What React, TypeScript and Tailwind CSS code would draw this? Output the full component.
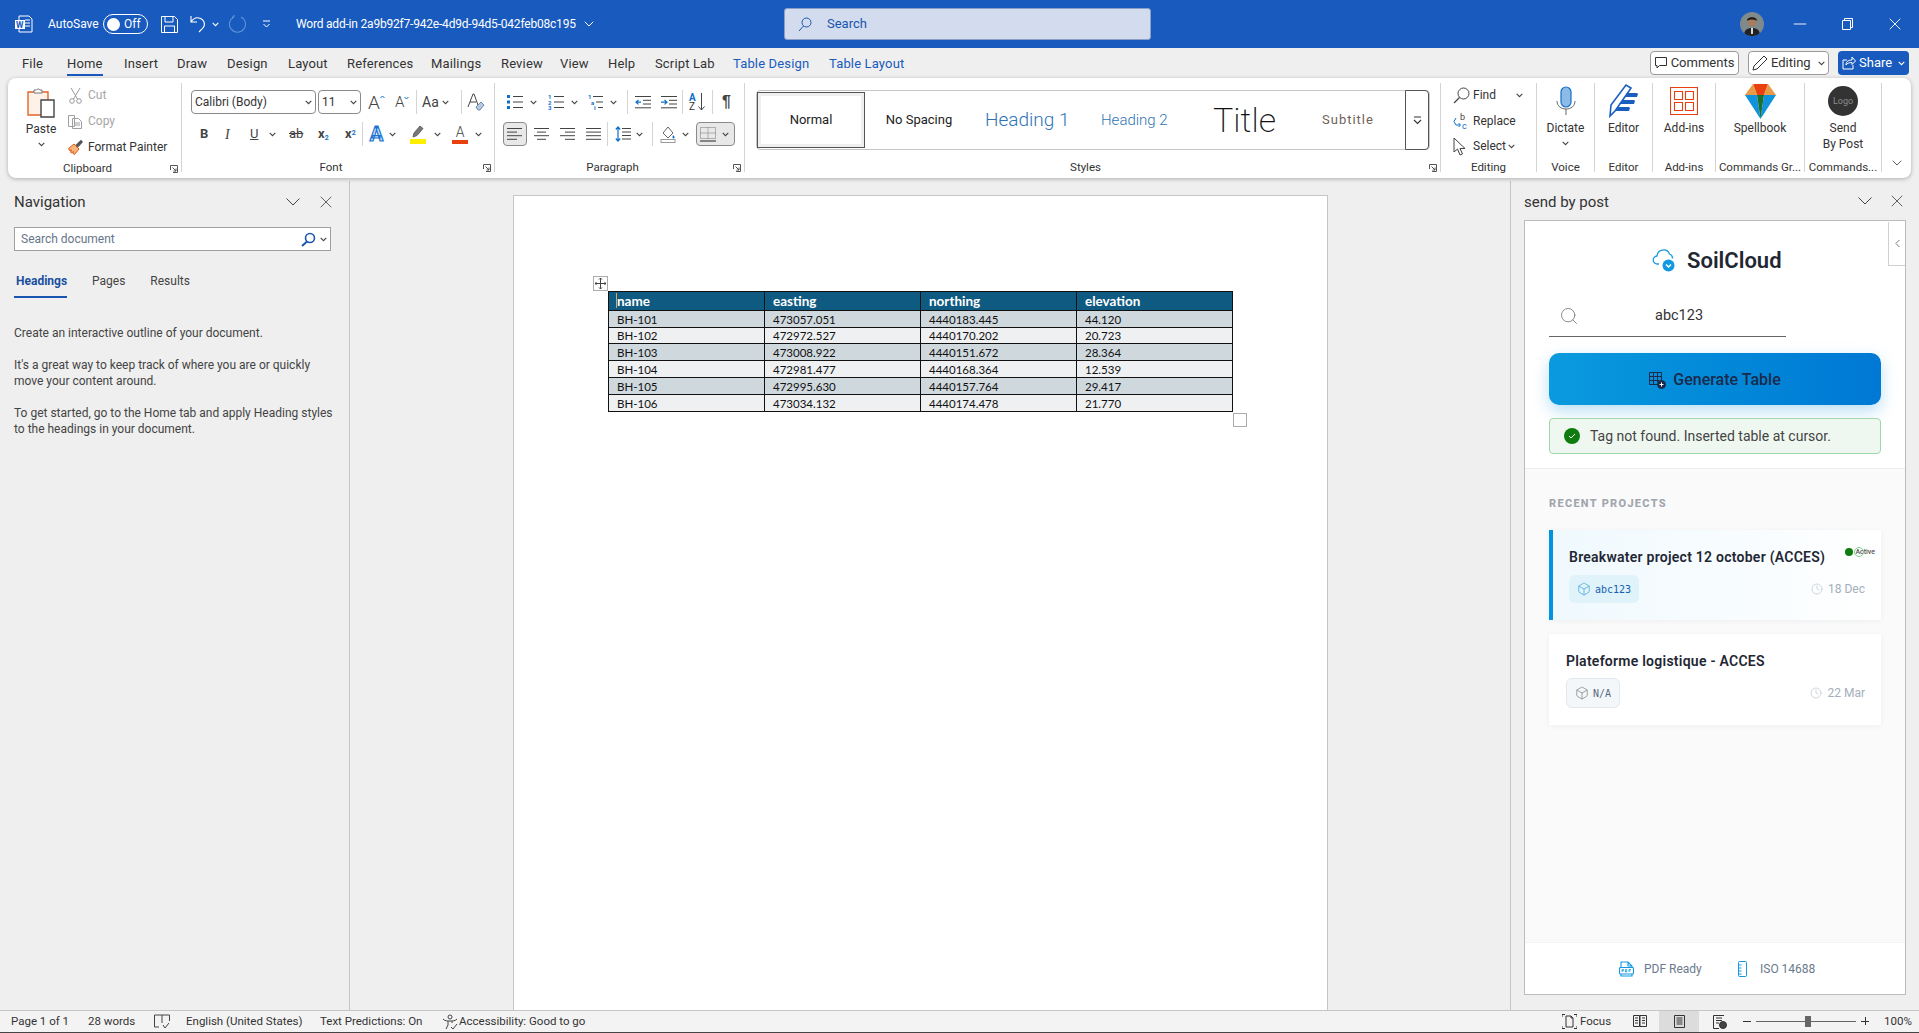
import { Box, ChevronDown, ChevronLeft, Clock, Minus, Search, X } from 'lucide-react';

const TABS = [
  { name: 'File', width: 'w-[45px]' },
  { name: 'Home', width: 'w-[57px]' },
  { name: 'Insert', width: 'w-[53px]' },
  { name: 'Draw', width: 'w-[50px]' },
  { name: 'Design', width: 'w-[61px]' },
  { name: 'Layout', width: 'w-[59px]' },
  { name: 'References', width: 'w-[84px]' },
  { name: 'Mailings', width: 'w-[70px]' },
  { name: 'Review', width: 'w-[59px]' },
  { name: 'View', width: 'w-[48px]' },
  { name: 'Help', width: 'w-[47px]' },
  { name: 'Script Lab', width: 'w-[78px]' },
];

const ROWS = [
  ['BH-101', '473057.051', '4440183.445', '44.120'],
  ['BH-102', '472972.527', '4440170.202', '20.723'],
  ['BH-103', '473008.922', '4440151.672', '28.364'],
  ['BH-104', '472981.477', '4440168.364', '12.539'],
  ['BH-105', '472995.630', '4440157.764', '29.417'],
  ['BH-106', '473034.132', '4440174.478', '21.770'],
];

function Chev({ className = 'text-[#444]' }: { className?: string }) {
  return (
    <svg width="7" height="5" viewBox="0 0 7 5" className={`shrink-0 ${className}`} fill="none" stroke="currentColor" strokeWidth="1.1">
      <path d="M.7.8 3.5 3.6 6.3.8" />
    </svg>
  );
}

function Launcher() {
  return (
    <svg width="8" height="8" viewBox="0 0 8 8" fill="none" stroke="#555" strokeWidth="1" className="absolute right-[3px] top-[5px]">
      <path d="M.5 5V.5H7.5V7.5H3M2.5 2.5 6 6M6 3.5V6H3.5" />
    </svg>
  );
}

function Group({ width, label, launcher, children }: { width: string; label: string; launcher?: boolean; children: React.ReactNode }) {
  return (
    <div className={`${width} flex h-[89px] shrink-0 flex-col border-r border-[#d4d4d4]`}>
      <div className="flex-1">{children}</div>
      <div className={`relative -mb-[3px] h-[16px] text-center text-[11.5px] leading-[16px] text-[#333] whitespace-nowrap ${launcher ? 'pr-[14px]' : ''}`}>
        {label}
        {launcher && <Launcher />}
      </div>
    </div>
  );
}

function Sep() {
  return <div className="mx-[5px] h-[24px] w-px shrink-0 bg-[#d4d4d4]" />;
}

// text alignment / list glyph made of horizontal strokes
function Lines({ rows }: { rows: [number, number][] }) {
  return (
    <svg width="16" height="14" viewBox="0 0 16 14" stroke="#444" strokeWidth="1" className="shrink-0">
      {rows.map(([a, b], i) => (
        <path key={i} d={`M${a} ${1.5 + i * 3.6}H${b}`} />
      ))}
    </svg>
  );
}

function ListIcon({ kind }: { kind: 'bullet' | 'number' | 'multi' }) {
  return (
    <svg width="16" height="16" viewBox="0 0 16 16" className="shrink-0">
      <g stroke="#444" strokeWidth="1">
        <path d={kind === 'multi' ? 'M5 2.5h10M8 8h7M10 13.5h5' : 'M6 2.5h10M6 8h10M6 13.5h10'} />
      </g>
      {kind === 'bullet' && (
        <g fill="#0e6fc9">
          <rect x="0" y="1" width="3" height="3" />
          <rect x="0" y="6.5" width="3" height="3" />
          <rect x="0" y="12" width="3" height="3" />
        </g>
      )}
      {kind === 'number' && (
        <g fill="#0e6fc9" fontSize="6" fontWeight="700" fontFamily="Roboto">
          <text x="0" y="5">1</text>
          <text x="0" y="10.5">2</text>
          <text x="0" y="16">3</text>
        </g>
      )}
      {kind === 'multi' && (
        <g fill="#0e6fc9" fontSize="6" fontWeight="700" fontFamily="Roboto">
          <text x="0" y="5">1</text>
          <text x="3" y="10.5">a</text>
          <text x="6" y="16">i</text>
        </g>
      )}
    </svg>
  );
}

function Indent({ more }: { more?: boolean }) {
  return (
    <svg width="16" height="14" viewBox="0 0 16 14" className="shrink-0">
      <path d="M0 1.5h16M8 5.3h8M8 9h8M0 12.8h16" stroke="#444" />
      <path d={more ? 'M0 7.2h6M3.500 5 6 7.2 3.500 9.400' : 'M6 7.2H1M3.500 5 1 7.2 3.500 9.400'} fill="none" stroke="#0e6fc9" strokeWidth="1.2" />
    </svg>
  );
}

function ClipboardGroup() {
  return (
    <div className="flex pl-[8px]">
      <div className="flex w-[50px] flex-col items-center">
        <svg width="28" height="31" viewBox="0 0 28 31" className="mt-[4px]">
          <path d="M1 5h20v23H1z" fill="#fdf1e8" stroke="#e0662a" strokeWidth="1.4" />
          <path d="M7 6V3h2.500a2 2 0 0 1 3.500 0H15v3z" fill="#fff" stroke="#777" />
          <path d="M14 13h13v17H14z" fill="#fff" stroke="#444" strokeWidth="1.4" />
        </svg>
        <div className="mt-[3px] text-[12px] leading-[16px] text-[#333]">Paste</div>
        <Chev className="mt-[5px] text-[#444]" />
      </div>
      <div className="-mt-[1px] ml-[2px] flex flex-col">
        <div className="flex h-[26px] items-center text-[12px] text-[#a6a6a6]">
          <svg width="15" height="17" viewBox="0 0 15 17" fill="none" stroke="#9a9a9a">
            <path d="M3 1l6.500 11M12 1 5.500 12" />
            <circle cx="4" cy="14" r="2.300" />
            <circle cx="11" cy="14" r="2.300" />
          </svg>
          <span className="ml-[5px]">Cut</span>
        </div>
        <div className="flex h-[26px] items-center text-[12px] text-[#a6a6a6]">
          <svg width="15" height="15" viewBox="0 0 15 15" fill="#fff" stroke="#a0a0a0">
            <path d="M.5 1.500h6v11h-6zM4.500 4.500h6l3 3v7h-9z" />
            <path d="M6 9h6M6 11h6" />
          </svg>
          <span className="ml-[5px]">Copy</span>
        </div>
        <div className="flex h-[26px] items-center text-[12px] text-[#333]">
          <svg width="16" height="16" viewBox="0 0 16 16">
            <path d="M.5 9.500 6 5l5 5-4.500 5.500L5 14.500l.5-2-2 1.500-1-1 1-2-2 .500z" fill="#f7b577" stroke="#d9541e" />
            <path d="M7.500 6 13 .8 15 3 10 8.500z" fill="#555" />
          </svg>
          <span className="ml-[4px] whitespace-nowrap">Format Painter</span>
        </div>
      </div>
    </div>
  );
}

function FontGroup() {
  return (
    <div className="pl-[9px]">
      <div className="mt-[7px] flex h-[24px] items-center">
        <div className="flex h-[24px] w-[125px] items-center justify-between rounded-[4px] border border-[#8a8a8a] px-[3px] text-[12px] text-[#333]">
          Calibri (Body) <Chev />
        </div>
        <div className="ml-[2px] flex h-[24px] w-[43px] items-center justify-between rounded-[4px] border border-[#8a8a8a] px-[3px] text-[12px] text-[#333]">
          11 <Chev />
        </div>
        <div className="ml-[7px] flex w-[18px] items-start text-[19px] leading-none font-light text-[#444]">
          A
          <svg width="5" height="4" viewBox="0 0 5 4" fill="none" stroke="#0e6fc9" className="mt-[2px] shrink-0">
            <path d="M.5 3 2.500 1l2 2" />
          </svg>
        </div>
        <div className="ml-[9px] flex w-[16px] items-start text-[15px] leading-none font-light text-[#444]">
          A
          <svg width="5" height="4" viewBox="0 0 5 4" fill="none" stroke="#0e6fc9" className="mt-[1px] shrink-0">
            <path d="M.5 1 2.500 3l2-2" />
          </svg>
        </div>
        <Sep />
        <div className="flex w-[34px] items-center gap-[3px] text-[14px] text-[#444]">Aa <Chev /></div>
        <Sep />
        <svg width="18" height="20" viewBox="0 0 18 20">
          <path d="M1 15 6 2h1l4 11M3 10h6" fill="none" stroke="#444" />
          <path d="M9 15l5-5 3 3-4 5h-2z" fill="#b9c9dc" stroke="#6a8db5" />
        </svg>
      </div>
      <div className="mt-[8px] flex h-[24px] items-center text-[#444]">
        <span className="ml-[9px] w-[8px] text-[13px] font-bold">B</span>
        <span className="ml-[17px] w-[8px] font-['Liberation_Serif'] text-[14px] italic">I</span>
        <span className="ml-[17px] w-[12px] text-[13px] underline">U</span>
        <Chev className="ml-[7px] text-[#444]" />
        <span className="ml-[13px] w-[16px] text-[13px] line-through">ab</span>
        <span className="ml-[13px] w-[14px] text-[13px] font-bold">x<sub className="text-[7px] text-[#0e6fc9]">2</sub></span>
        <span className="ml-[13px] w-[12px] text-[13px] font-bold">x<sup className="text-[7px] text-[#0e6fc9]">2</sup></span>
        <Sep />
        <span className="w-[17px] text-center text-[20px] leading-[20px] font-bold text-[#d4e7fa] [-webkit-text-stroke:1.2px_#1a73d0]">A</span>
        <Chev className="ml-[4px] text-[#444]" />
        <svg width="17" height="19" viewBox="0 0 17 19" className="ml-[14px]">
          <path d="M3 12 4 8l6-7 3 2.500-6 7z" fill="#777" stroke="#666" />
          <rect y="14" width="16" height="5" fill="#ffee00" />
        </svg>
        <Chev className="ml-[7px] text-[#444]" />
        <div className="ml-[11px] flex w-[16px] flex-col items-center">
          <span className="text-[14px] leading-[14px] font-light text-[#444]">A</span>
          <span className="mt-[1px] h-[4px] w-[16px] bg-[#e8410f]" />
        </div>
        <Chev className="ml-[7px] text-[#444]" />
      </div>
    </div>
  );
}

function ParagraphGroup() {
  return (
    <div>
      <div className="mt-[7px] flex h-[24px] items-center pl-[12px]">
        <ListIcon kind="bullet" />
        <Chev className="ml-[7px] text-[#444]" />
        <span className="w-[11px]" />
        <ListIcon kind="number" />
        <Chev className="ml-[7px] text-[#444]" />
        <span className="w-[10px]" />
        <ListIcon kind="multi" />
        <Chev className="ml-[6px] text-[#444]" />
        <span className="w-[5px]" />
        <Sep />
        <span className="w-[2px]" />
        <Indent />
        <span className="w-[10px]" />
        <Indent more />
        <Sep />
        <div className="ml-[1px] flex w-[16px] flex-col text-[10px] leading-[9px] font-bold">
          <span className="text-[#0e6fc9]">A</span>
          <span className="font-normal text-[#333]">Z</span>
        </div>
        <svg width="7" height="18" viewBox="0 0 7 18" stroke="#444" fill="none" className="-ml-[7px]">
          <path d="M3.500 0v17M.5 13.500l3 3.500 3-3.500" />
        </svg>
        <span className="w-[2px]" />
        <Sep />
        <span className="ml-[4px] font-['Liberation_Sans'] text-[16px] font-bold text-[#444]">¶</span>
      </div>
      <div className="mt-[8px] flex h-[24px] items-center pl-[8px]">
        <div className="flex h-[24px] w-[24px] items-center justify-center rounded-[4px] border border-[#8a8a8a] bg-[#e8e8e8]">
          <Lines rows={[[0, 15], [0, 10], [0, 15], [0, 10]]} />
        </div>
        <span className="w-[7px]" />
        <Lines rows={[[0, 15], [3, 12], [0, 15], [3, 12]]} />
        <span className="w-[10px]" />
        <Lines rows={[[0, 15], [5, 15], [0, 15], [5, 15]]} />
        <span className="w-[10px]" />
        <Lines rows={[[0, 15], [0, 15], [0, 15], [0, 15]]} />
        <Sep />
        <svg width="16" height="16" viewBox="0 0 16 16" className="ml-[2px] shrink-0">
          <path d="M3 1v14M.8 3.500 3 1l2.200 2.500M.8 12.500 3 15l2.200-2.500" fill="none" stroke="#0e6fc9" strokeWidth="1.2" />
          <path d="M7 2.500h9M7 6h9M7 9.500h9M7 13h9" stroke="#444" />
        </svg>
        <Chev className="ml-[5px] text-[#444]" />
        <span className="w-[4px]" />
        <Sep />
        <svg width="16" height="18" viewBox="0 0 16 18" className="ml-[2px] shrink-0">
          <path d="M3 8 8 2l5 6-5 5z" fill="#fff" stroke="#666" />
          <path d="M13 10c1 1 2 2 1.500 3-.5.8-2 .5-2-.8 0-.7.200-1.400.500-2.200z" fill="#0e6fc9" />
          <rect x="1" y="14.500" width="14" height="3" fill="#fff" stroke="#999" />
        </svg>
        <Chev className="ml-[6px] text-[#444]" />
        <div className="ml-[7px] flex h-[24px] w-[39px] items-center justify-between rounded-[4px] border border-[#8a8a8a] bg-[#e8e8e8] pr-[5px] pl-[3px]">
          <svg width="16" height="15" viewBox="0 0 16 15" fill="none">
            <path d="M.5.500h15v11h-15zM8 .5v11M.5 6h15" stroke="#777" strokeDasharray="1 1" />
            <path d="M0 14h16" stroke="#222" />
          </svg>
          <Chev />
        </div>
      </div>
    </div>
  );
}

function StylesGroup() {
  return (
    <div className="pl-[11px]">
      <div className="mt-[7px] flex h-[60px] w-[674px] items-center rounded-[4px] border border-[#c6c6c6]">
        <div className="flex h-[56px] w-[108px] shrink-0 items-center justify-center border border-[#555] text-[13px] text-[#222] shadow-[inset_0_0_0_3px_#efefef]">
          Normal
        </div>
        <div className="w-[108px] shrink-0 text-center text-[13px] text-[#222]">No Spacing</div>
        <div className="ml-[12px] w-[96px] shrink-0 text-[19px] font-light text-[#2e74b5]">Heading 1</div>
        <div className="ml-[20px] w-[88px] shrink-0 text-[15px] font-light text-[#2e74b5]">Heading 2</div>
        <div className="ml-[24px] w-[86px] shrink-0 text-[34px] leading-none font-extralight text-[#111]">Title</div>
        <div className="w-[72px] shrink-0 pl-[23px] text-[13px] tracking-[1px] text-[#6f6259]">Subtitle</div>
        <div className="ml-auto flex h-[60px] w-[24px] shrink-0 items-center justify-center rounded-r-[4px] border border-[#555]">
          <svg width="9" height="9" viewBox="0 0 9 9" fill="none" stroke="#333" strokeWidth="1.100">
            <path d="M1 1h7M1 4l3.500 3.500L8 4" />
          </svg>
        </div>
      </div>
    </div>
  );
}

function EditingGroup() {
  return (
    <div className="-mt-[1px] flex flex-col pl-[12px] text-[12px] text-[#333]">
      <div className="flex h-[26px] items-center">
        <svg width="17" height="17" viewBox="0 0 17 17" fill="none" stroke="#444">
          <circle cx="10.500" cy="6.500" r="5.500" />
          <path d="M6.500 10.500 1 16" strokeWidth="1.300" />
        </svg>
        <span className="ml-[3px]">Find</span>
        <Chev className="ml-[20px] text-[#444]" />
      </div>
      <div className="flex h-[26px] items-center">
        <svg width="16" height="17" viewBox="0 0 16 17" className="shrink-0">
          <text x="7" y="7" fontSize="9" fill="#444" fontFamily="Roboto">b</text>
          <text x="9" y="16" fontSize="9" fill="#0e6fc9" fontFamily="Roboto">c</text>
          <path d="M3 5 1 8.500 3 12h4M5.500 10 7.500 12 5.500 14" fill="none" stroke="#0e6fc9" />
        </svg>
        <span className="ml-[4px]">Replace</span>
      </div>
      <div className="-mt-[1px] flex h-[26px] items-center">
        <svg width="14" height="19" viewBox="0 0 14 19" fill="#fff" stroke="#444">
          <path d="M1 1v14l3.500-3 2.500 6 2.500-1-2.500-5.500h5z" />
        </svg>
        <span className="ml-[6px]">Select</span>
        <Chev className="ml-[2px] text-[#444]" />
      </div>
    </div>
  );
}

function BigButton({ icon, label, chevron }: { icon: React.ReactNode; label: React.ReactNode; chevron?: boolean }) {
  return (
    <div className="flex flex-col items-center text-center text-[12px] leading-[16px] text-[#333]">
      <div className="mt-[3px] flex h-[30px] items-center">{icon}</div>
      <div className="mt-[4px]">{label}</div>
      {chevron && <Chev className="mt-[5px] text-[#444]" />}
    </div>
  );
}

function Ribbon() {
  return (
    <div className="relative z-10 mx-[8px] flex h-[100px] rounded-[8px] bg-white pt-[5px] shadow-[0_1px_4px_rgba(0,0,0,0.28)]">
      <Group width="w-[174px]" label="Clipboard" launcher>
        <ClipboardGroup />
      </Group>
      <Group width="w-[313px]" label="Font" launcher>
        <FontGroup />
      </Group>
      <Group width="w-[250px]" label="Paragraph" launcher>
        <ParagraphGroup />
      </Group>
      <Group width="w-[696px]" label="Styles" launcher>
        <StylesGroup />
      </Group>
      <Group width="w-[96px]" label="Editing">
        <EditingGroup />
      </Group>
      <Group width="w-[58px]" label="Voice">
        <BigButton
          chevron
          label="Dictate"
          icon={
            <svg width="20" height="30" viewBox="0 0 20 30" fill="none">
              <rect x="5" y="1" width="10" height="20" rx="5" fill="#8cbbe8" stroke="#1a6fc9" strokeWidth="1.200" />
              <path d="M1 15c0 5 4 8 9 8s9-3 9-8M10 23v6" stroke="#666" />
            </svg>
          }
        />
      </Group>
      <Group width="w-[58px]" label="Editor">
        <BigButton
          label="Editor"
          icon={
            <svg width="31" height="36" viewBox="0 0 31 36">
              <path d="M2 33 3 22 18 2l5 3-2 3-14 20z" fill="#fff" stroke="#1a5fc0" strokeWidth="1.600" />
              <path d="M20 10h9l1 1-1 3H17zM15 17h11l1 1-1 3H11zM10 24h11l1 1-1 3H7z" fill="#1a5fc0" />
            </svg>
          }
        />
      </Group>
      <Group width="w-[63px]" label="Add-ins">
        <BigButton
          label="Add-ins"
          icon={
            <svg width="28" height="28" viewBox="0 0 28 28" fill="none" stroke="#e8410f" strokeWidth="1.100">
              <path d="M.5.500h27v27H.5zM4.500 4.500h8v8h-8zM15.500 4.500h8v8h-8zM4.500 15.500h8v8h-8zM15.500 15.500h8v8h-8z" />
            </svg>
          }
        />
      </Group>
      <Group width="w-[89px]" label="Commands Gr...">
        <BigButton
          label="Spellbook"
          icon={
            <svg width="31" height="36" viewBox="0 0 31 36">
              <path d="M8 1h15l-4 11h-7z" fill="#e8410f" />
              <path d="M8 1 0 12h12zM23 1l8 11H19z" fill="#e89a45" />
              <path d="M0 12h12l3.500 24zM31 12H19l-3.500 24z" fill="#1093dc" />
              <path d="M12 12h7l-3.500 24z" fill="#1a7030" />
            </svg>
          }
        />
      </Group>
      <Group width="w-[77px]" label="Commands...">
        <BigButton
          label={
            <>
              Send
              <br />
              By Post
            </>
          }
          icon={
            <div className="flex h-[30px] w-[30px] items-center justify-center rounded-full bg-[#333] text-[9px] text-[#8d8d8d]">Logo</div>
          }
        />
      </Group>
      <ChevronDown size={16} strokeWidth={1.2} className="absolute right-[6px] top-[77px] text-[#333]" />
    </div>
  );
}

function TitleBar() {
  return (
    <div className="flex h-[48px] items-center bg-[#185abd] text-white">
      <svg width="18" height="18" viewBox="0 0 18 18" className="ml-[15px] shrink-0">
        <path d="M4 1h10l3 3v13H4z" fill="none" stroke="#fff" />
        <path d="M10 5h5M10 8h5M10 11h5" stroke="#fff" />
        <rect y="5" width="10" height="9" fill="#fff" />
        <text x="1" y="13" fontSize="8.500" fontWeight="700" fill="#185abd" fontFamily="Roboto">W</text>
      </svg>
      <span className="ml-[15px] w-[50px] text-[12px]">AutoSave</span>
      <div className="ml-[5px] flex h-[20px] w-[45px] items-center rounded-full border border-white pl-[3px]">
        <span className="h-[13px] w-[13px] rounded-full bg-white" />
        <span className="ml-[4px] text-[12px]">Off</span>
      </div>
      <svg width="17" height="17" viewBox="0 0 17 17" fill="none" stroke="#fff" className="ml-[13px]">
        <path d="M.5.500h13l3 3v13H.5zM4 .5v5.500h8V.5M3.500 16.500V10h10v6.500" />
      </svg>
      <svg width="17" height="18" viewBox="0 0 17 18" fill="none" stroke="#fff" strokeWidth="1.100" className="ml-[12px]">
        <path d="M1 1v6h6M1 7c2-3 5-5 8-4 5 1 7 6 4 10l-4 4" />
      </svg>
      <Chev className="ml-[5px] text-white" />
      <svg width="17" height="18" viewBox="0 0 17 18" fill="none" stroke="#5e93d6" strokeWidth="1.100" className="ml-[10px]">
        <path d="M5 2a8 8 0 1 0 7 0M5 2V0M5 2H3" />
      </svg>
      <svg width="9" height="8" viewBox="0 0 9 8" fill="none" stroke="#fff" className="ml-[16px]">
        <path d="M1 1h7M1.500 4 4.500 7l3-3" />
      </svg>
      <span className="ml-[25px] w-[284px] text-[12px] tracking-[-0.2px] whitespace-nowrap">Word add-in 2a9b92f7-942e-4d9d-94d5-042feb08c195</span>
      <ChevronDown size={16} strokeWidth={1.5} className="ml-[1px]" />
      <div className="ml-[187px] flex h-[32px] w-[367px] items-center rounded-[3px] border border-[#8ba0c6] bg-[#d2dcee] pl-[13px] text-[#1a56b0]">
        <svg width="14" height="15" viewBox="0 0 14 15" fill="none" stroke="currentColor">
          <circle cx="8.500" cy="5.500" r="4.500" />
          <path d="M5.500 9 1 14" />
        </svg>
        <span className="ml-[15px] text-[13px]">Search</span>
      </div>
      <div className="ml-[589px] flex h-[24px] w-[24px] shrink-0 items-center justify-center overflow-hidden rounded-full bg-[#7f8a8c]">
        <svg width="24" height="24" viewBox="0 0 24 24">
          <path d="M4 24c0-6 3-8 8-8s8 2 8 8z" fill="#1f2125" />
          <circle cx="12" cy="10" r="4.500" fill="#a67c5e" />
          <path d="M7 9c0-5 10-5 10 0-2-2-8-2-10 0z" fill="#1a1412" />
          <path d="M11 16h2v6h-2z" fill="#d8d8d8" />
        </svg>
      </div>
      <Minus size={20} strokeWidth={1.1} className="ml-[26px]" />
      <svg width="11" height="12" viewBox="0 0 11 12" fill="none" stroke="#fff" className="ml-[32px]">
        <path d="M.5 2.500h8v9h-8zM2.500 2.500V.5h8v9h-2" />
      </svg>
      <X size={20} strokeWidth={1.1} className="ml-[32px]" />
    </div>
  );
}

function TabsRow() {
  return (
    <div className="flex h-[30px] items-center pl-[22px] text-[13px] text-[#333]">
      <div className="flex items-center pt-[1px] tracking-[0.15px]">
        {TABS.map((t) => (
          <div key={t.name} className={`${t.width} whitespace-nowrap`}>
            <span className="relative">
              {t.name}
              {t.name === 'Home' && <span className="absolute -bottom-[5px] left-0 h-[2px] w-full bg-[#185abd]" />}
            </span>
          </div>
        ))}
        <div className="w-[96px] whitespace-nowrap text-[#185abd]">Table Design</div>
        <div className="whitespace-nowrap text-[#185abd]">Table Layout</div>
      </div>
      <div className="ml-auto flex items-center gap-[9px] pr-[10px]">
        <div className="flex h-[24px] w-[89px] items-center justify-center gap-[4px] rounded-[4px] border border-[#9a9a9a] bg-white text-[13px]">
          <svg width="12" height="12" viewBox="0 0 12 12" fill="none" stroke="#333">
            <path d="M.5.500h11v8h-7l-2.500 2.500v-2.500H.5z" />
          </svg>
          Comments
        </div>
        <div className="flex h-[24px] w-[81px] items-center gap-[3px] rounded-[4px] border border-[#9a9a9a] bg-white pl-[3px] text-[13px]">
          <svg width="16" height="16" viewBox="0 0 16 16" fill="none" stroke="#333">
            <path d="M1 15l1-4L12 1l3 3L5 14z" />
          </svg>
          Editing
          <Chev className="ml-[4px] text-[#444]" />
        </div>
        <div className="flex h-[24px] w-[71px] items-center gap-[3px] rounded-[4px] bg-[#185abd] pl-[4px] text-[13px] text-white">
          <svg width="14" height="14" viewBox="0 0 14 14" fill="none" stroke="#fff">
            <path d="M5 4H1v9h10V9M4 9c0-4 3-5 6-5V1l3.500 4L10 8.500V6.500C8 6.500 5 7 4 9z" />
          </svg>
          Share
          <Chev className="ml-[3px] text-white" />
        </div>
      </div>
    </div>
  );
}

function NavPane() {
  return (
    <div className="mt-[3px] w-[350px] shrink-0 border-r border-[#c6c6c6]">
      <div className="flex h-[42px] items-center pr-[13px] pl-[14px]">
        <span className="text-[15px] text-[#333]">Navigation</span>
        <svg width="14" height="8" viewBox="0 0 14 8" fill="none" stroke="#444" className="mr-[16px] ml-auto">
          <path d="M.5.500 7 7l6.500-6.500" />
        </svg>
        <X size={20} strokeWidth={1} className="text-[#444]" />
      </div>
      <div className="mx-[14px] mt-[4px] flex h-[24px] w-[317px] items-center border border-[#a0a0a0] bg-white pl-[6px] text-[12px] text-[#66758a]">
        Search document
        <svg width="15" height="15" viewBox="0 0 15 15" fill="none" stroke="#1a56b0" strokeWidth="1.600" className="ml-auto">
          <circle cx="9" cy="6" r="4.500" />
          <path d="M6 9.500 1 14" strokeWidth="2" />
        </svg>
        <Chev className="mr-[3px] ml-[4px] text-[#444]" />
      </div>
      <div className="mt-[21px] flex h-[28px] items-start pl-[14px] text-[12px] text-[#444]">
        <div className="w-[53px] border-b-2 border-[#1a56b0] pb-[6px] pl-[2px] leading-[18px] font-bold text-[#1a4fa0]">Headings</div>
        <div className="ml-[25px] leading-[18px]">Pages</div>
        <div className="ml-[25px] leading-[18px]">Results</div>
      </div>
      <div className="mt-[25px] pl-[14px] text-[12px] leading-[16px] text-[#444]">
        <p>Create an interactive outline of your document.</p>
        <p className="mt-[16px]">
          It's a great way to keep track of where you are or quickly
          <br />
          move your content around.
        </p>
        <p className="mt-[16px]">
          To get started, go to the Home tab and apply Heading styles
          <br />
          to the headings in your document.
        </p>
      </div>
    </div>
  );
}

function DocTable() {
  return (
    <div className="relative ml-[94px] w-[625px] font-['Lato']">
      <div className="absolute -top-[15px] -left-[15px] flex h-[15px] w-[15px] items-center justify-center border border-[#ababab] bg-white">
        <svg width="11" height="11" viewBox="0 0 11 11" fill="none" stroke="#444">
          <path d="M5.500 0v11M0 5.500h11M4 1.500 5.500 0 7 1.500M4 9.500 5.500 11 7 9.500M1.500 4 0 5.500 1.500 7M9.500 4 11 5.500 9.500 7" />
        </svg>
      </div>
      <table className="w-[625px] table-fixed border-collapse border border-[#111] text-[11.5px] text-[#111]">
        <thead>
          <tr className="h-[19px] bg-[#0f5a80] text-[13.5px] font-bold text-white">
            {['name', 'easting', 'northing', 'elevation'].map((h) => (
              <td key={h} className="border border-[#111] pl-[8px] leading-[16px]">{h}</td>
            ))}
          </tr>
        </thead>
        <tbody>
          {ROWS.map((r, i) => (
            <tr key={r[0]} className={`${i === 1 ? 'h-[16px]' : 'h-[17px]'} ${i % 2 === 0 ? 'bg-[#cfd8dd]' : 'bg-[#eef0f2]'}`}>
              {r.map((c) => (
                <td key={c} className="border border-[#111] pt-[1px] pl-[8px] leading-[14px]">{c}</td>
              ))}
            </tr>
          ))}
        </tbody>
      </table>
      <span className="absolute top-[2px] left-[8px] h-[15px] w-px bg-[#d9a866]" />
      <div className="absolute -right-[14px] -bottom-[15px] h-[14px] w-[14px] border border-[#ababab] bg-white" />
    </div>
  );
}

function RecentCard({ active, name, code, date }: { active?: boolean; name: string; code: string; date: string }) {
  return (
    <div
      className={
        active
          ? 'relative h-[90px] border-l-4 border-[#0095dc] bg-gradient-to-r from-[#eff9fe] to-white pt-[16px] pl-[16px] shadow-[0_1px_6px_rgba(0,0,0,0.05)]'
          : 'relative mt-[14px] h-[91px] bg-white pt-[16px] pl-[17px] shadow-[0_1px_6px_rgba(0,0,0,0.05)]'
      }
    >
      <div className="text-[14px] leading-[22px] font-semibold tracking-[0.25px] whitespace-nowrap text-[#1f2733]">{name}</div>
      {active && (
        <div className="absolute top-[17px] right-[6px] flex items-center gap-[2px]">
          <span className="h-[8px] w-[8px] rounded-full bg-[#107c10]" />
          <span className="relative text-[7px] leading-[10px] font-medium text-[#555]">
            Active
            <span className="absolute top-0 -left-[1px] h-[10px] w-[10px] rounded-full border border-[#7fd18f]" />
          </span>
        </div>
      )}
      <div className={`flex items-center justify-between pr-[16px] ${active ? 'mt-[7px]' : 'mt-[6px]'}`}>
        <div
          className={
            active
              ? 'flex h-[28px] w-[70px] items-center gap-[4px] rounded-[6px] bg-[#e0f3fa] pl-[8px] text-[#1560b0]'
              : 'flex h-[30px] w-[54px] items-center gap-[4px] rounded-[6px] border border-[#e2e8ee] bg-[#f3f7fa] pl-[8px] text-[#5a6b80]'
          }
        >
          <Box size={14} strokeWidth={1} className={active ? 'text-[#1e90d8]' : 'text-[#666]'} />
          <span className="font-['DejaVu_Sans_Mono'] text-[10px] font-medium">{code}</span>
        </div>
        <div className="flex items-center gap-[5px] text-[12px] text-[#a3afbd]">
          <Clock size={12} strokeWidth={1} />
          {date}
        </div>
      </div>
    </div>
  );
}

function TaskPane() {
  return (
    <div className="mt-[3px] flex w-[409px] shrink-0 flex-col border-l border-[#c6c6c6] pr-[13px] pl-[13px]">
      <div className="flex h-[39px] shrink-0 items-center pr-[4px]">
        <span className="pt-[3px] text-[15px] text-[#333]">send by post</span>
        <svg width="14" height="8" viewBox="0 0 14 8" fill="none" stroke="#444" className="mr-[15px] ml-auto">
          <path d="M.5.500 7 7l6.500-6.500" />
        </svg>
        <X size={20} strokeWidth={1} className="-mr-[5px] text-[#444]" />
      </div>
      <div className="relative flex h-[775px] w-[382px] shrink-0 flex-col border border-[#bcbcbc]">
        <div className="absolute top-[1px] right-0 flex h-[44px] w-[17px] items-center justify-center border-b border-l border-[#d0d0d0] bg-white">
          <ChevronLeft size={13} strokeWidth={1.3} className="text-[#444]" />
        </div>
        <div className="h-[248px] shrink-0 border-b border-[#eeeeee] bg-white px-[24px] pt-[26px]">
          <div className="flex h-[26px] items-center pl-[103px]">
            <svg width="23" height="23" viewBox="0 0 23 23" fill="none">
              <path d="M7 15H5.500a4 4 0 0 1-.5-8 6.500 6.500 0 0 1 12.500-2 4.500 4.500 0 0 1 3 4.500" stroke="#1299e2" strokeWidth="1.300" />
              <circle cx="16.500" cy="16.500" r="6" fill="#1299e2" />
              <path d="M14 15.500l2.500 2.500 2.500-2.500" stroke="#fff" strokeWidth="1.500" />
            </svg>
            <span className="ml-[12px] text-[22px] font-semibold text-[#1f2733]">SoilCloud</span>
          </div>
          <div className="mt-[22px] flex h-[42px] w-[237px] items-center border-b border-[#666] pl-[10px]">
            <Search size={20} strokeWidth={0.9} className="text-[#666]" />
            <span className="ml-[76px] text-[14.500px] text-[#333]">abc123</span>
          </div>
          <div className="mt-[16px] flex h-[52px] w-[332px] items-center justify-center gap-[7px] rounded-[10px] bg-gradient-to-r from-[#0b9ade] to-[#0078d4] pt-[2px] text-[16px] font-medium text-[#1b2a4a] shadow-[0_6px_16px_rgba(0,140,220,0.28)]">
            <svg width="17" height="17" viewBox="0 0 17 17" fill="none" stroke="#1b2a4a">
              <path d="M.5.500h12v11M.5.500v12h11M.5 4.500h12M.5 8.500h10M4.500.5v12M8.500.5v10" />
              <circle cx="12.500" cy="12.500" r="4" fill="#1b2a4a" />
              <path d="M12.500 10.500v4M10.500 12.500h4" stroke="#fff" />
            </svg>
            Generate Table
          </div>
          <div className="mt-[13px] flex h-[36px] w-[332px] items-center rounded-[4px] border border-[#9fd8a8] bg-[#eff8f0] pl-[14px] text-[14px] text-[#444]">
            <svg width="16" height="16" viewBox="0 0 16 16">
              <circle cx="8" cy="8" r="8" fill="#107c10" />
              <path d="M5 8l2 2 4-4" fill="none" stroke="#fff" />
            </svg>
            <span className="ml-[10px]">Tag not found. Inserted table at cursor.</span>
          </div>
        </div>
        <div className="flex-1 bg-[#fafafa] px-[24px] pt-[27px]">
          <div className="h-[16px] text-[11px] leading-[16px] font-extrabold tracking-[1.300px] text-[#a0a5ad]">RECENT PROJECTS</div>
          <div className="mt-[18px] w-[332px]">
            <RecentCard active name="Breakwater project 12 october (ACCES)" code="abc123" date="18 Dec" />
            <RecentCard name="Plateforme logistique - ACCES" code="N/A" date="22 Mar" />
          </div>
        </div>
        <div className="flex h-[52px] shrink-0 items-center border-t border-[#f0f5fa] bg-white pl-[94px] text-[12px] text-[#6b7a8d]">
          <svg width="15" height="16" viewBox="0 0 15 16" fill="none" stroke="#1299e2" strokeWidth="1.100">
            <path d="M2 6V1h7l4 4v1M9 1v4h4M2 13v2h11v-2" />
            <rect x=".5" y="6.500" width="14" height="6.500" rx="1" />
            <path d="M3 11V8.500h1.500v1.300H3M6.500 8.500V11h1.200V8.500zM10 11V8.500h2M10 9.800h1.500" strokeWidth=".8" />
          </svg>
          <span className="ml-[10px] w-[58px]">PDF Ready</span>
          <svg width="9" height="16" viewBox="0 0 9 16" fill="none" stroke="#1299e2" className="ml-[36px]">
            <rect x=".5" y=".5" width="8" height="15" rx="1" />
            <path d="M.5 4h3M.5 7h3M.5 10h3M.5 13h3" />
          </svg>
          <span className="ml-[13px]">ISO 14688</span>
        </div>
      </div>
    </div>
  );
}

function StatusBar() {
  return (
    <div className="flex h-[23px] items-center border-t border-b border-[#c6c6c6] border-b-[#444] bg-[#f3f3f3] text-[11.500px] whitespace-nowrap text-[#333]">
      <span className="ml-[11px] w-[57px]">Page 1 of 1</span>
      <span className="ml-[20px] w-[46px]">28 words</span>
      <svg width="16" height="15" viewBox="0 0 16 15" fill="none" stroke="#444" className="ml-[20px]">
        <path d="M3 1H.5v12H5M8 1h7.500v6M8 1v8M3 1h5M9 11l2 3 4-5" />
      </svg>
      <span className="ml-[16px] w-[116px]">English (United States)</span>
      <span className="ml-[18px] w-[102px]">Text Predictions: On</span>
      <svg width="16" height="16" viewBox="0 0 16 16" fill="none" stroke="#444" className="ml-[20px]">
        <circle cx="8" cy="3" r="2" />
        <path d="M1 5c2 2 4 2 7 2s5 0 7-2M6 7v4l-2 4M10 7v2M9 13l2 2 4-5" />
      </svg>
      <span className="ml-[1px] w-[127px]">Accessibility: Good to go</span>
      <svg width="15" height="15" viewBox="0 0 15 15" fill="none" stroke="#333" className="ml-[976px]">
        <path d="M0 3V.5h3M12 .5h3V3M0 12v2.500h3M12 14.500h3V12M4 2h5l2 2v9H4zM9 2v2h2" />
      </svg>
      <span className="ml-[3px] w-[28px]">Focus</span>
      <svg width="14" height="13" viewBox="0 0 14 13" fill="none" stroke="#333" className="ml-[25px]">
        <path d="M.5.500h6v11h-6zM7 .5h6.500v11H7zM2 3h3M2 5.500h3M2 8h3M9 3h3M9 5.500h3M9 8h3" />
      </svg>
      <div className="ml-[12px] flex h-[21px] w-[40px] items-center justify-center bg-[#dcdcdc]">
        <svg width="11" height="13" viewBox="0 0 11 13" fill="none" stroke="#333">
          <path d="M.5.500h10v12H.5zM2.500 3h6M2.500 5h6M2.500 7h6M2.500 9h6" />
        </svg>
      </div>
      <svg width="14" height="14" viewBox="0 0 14 14" fill="none" stroke="#333" className="ml-[14px]">
        <path d="M11 .5H.5v13H6M3 3h6M3 5.500h6M3 8h3" />
        <circle cx="10" cy="10" r="3.500" fill="#444" />
      </svg>
      <span className="ml-[16px] h-px w-[8px] bg-[#333]" />
      <div className="relative ml-[5px] h-px w-[100px] bg-[#666]">
        <span className="absolute top-[-5px] left-[49px] h-[11px] w-[6px] bg-[#666]" />
      </div>
      <span className="relative ml-[5px] h-px w-[8px] bg-[#333]">
        <span className="absolute top-[-4px] left-[4px] h-[8px] w-px bg-[#333]" />
      </span>
      <span className="ml-[15px]">100%</span>
    </div>
  );
}

export default function App() {
  return (
    <div className="flex h-[1033px] w-[1919px] flex-col overflow-hidden bg-[#efefef] font-['Roboto',sans-serif]">
      <TitleBar />
      <TabsRow />
      <Ribbon />
      <div className="flex h-[832px] shrink-0">
        <NavPane />
        <div className="w-[1160px] shrink-0 overflow-hidden">
          <div className="mt-[17px] ml-[163px] h-[815px] w-[815px] border border-b-0 border-[#c6c6c6] bg-white pt-[95px]">
            <DocTable />
          </div>
        </div>
        <TaskPane />
      </div>
      <StatusBar />
    </div>
  );
}
